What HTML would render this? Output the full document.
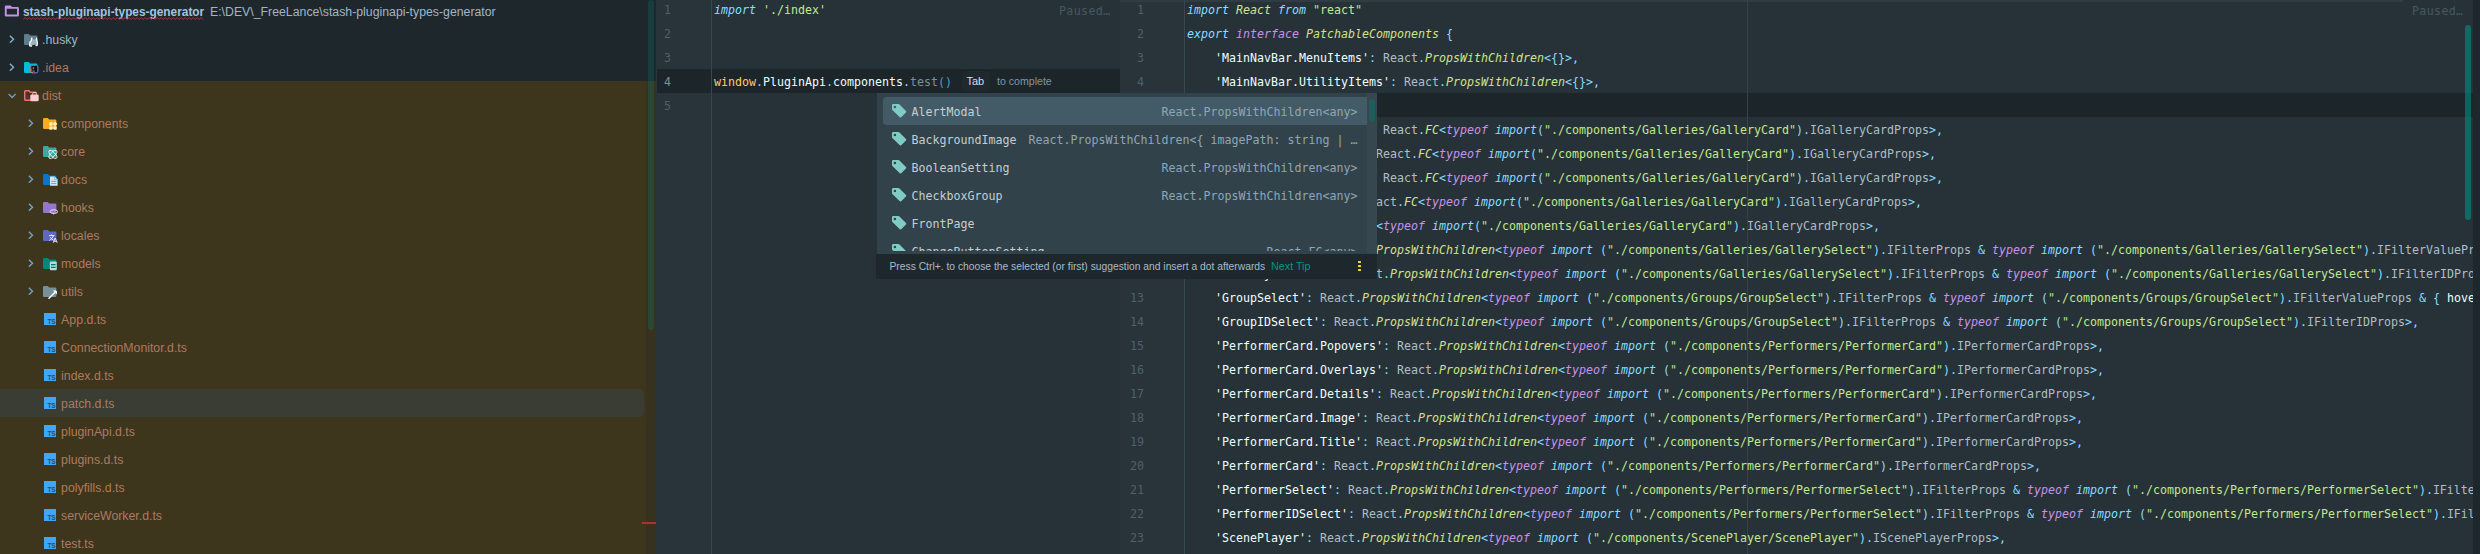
<!DOCTYPE html>
<html lang="en"><head><meta charset="utf-8"><title>IDE</title>
<style>
html,body{margin:0;padding:0;background:#263238;}
body{width:2480px;height:554px;position:relative;overflow:hidden;font-family:"Liberation Sans",sans-serif;}
.ab{position:absolute;display:block}
#tree{position:absolute;left:0;top:0;width:656px;height:554px;background:#1e272c;overflow:hidden}
#olive{position:absolute;left:0;top:81px;width:656px;height:473px;background:#3d351c}
#track{position:absolute;left:646px;top:81px;width:10px;height:473px;background:#36321f}
#thumb{position:absolute;left:648px;top:0px;width:6px;height:330px;border-radius:3px;background:rgba(0,150,136,.2)}
#sel{position:absolute;left:-6px;top:389px;width:650px;height:28px;border-radius:5px;background:#393d33}
#err{position:absolute;left:642px;top:522px;width:14px;height:2px;background:#b0302f}
#sep{position:absolute;left:656px;top:0;width:1px;height:554px;background:#2a353b}
.tx{position:absolute;height:22px;line-height:22px;font-size:12.3px;white-space:pre}
.root{color:#a0c6e1;font-size:11.87px}
.root b{font-weight:bold}
.path{color:#a2b5c4}
.tb{color:#9fb6c6}
.ig{color:#ad7a60}
.ts{position:absolute;width:12px;height:12px;background:#42a5f5}
.ts span{position:absolute;right:0.5px;bottom:0px;font:bold 6.5px/7px "Liberation Sans",sans-serif;color:#2b4a63;letter-spacing:-0.2px}
.ed{position:absolute;top:0;height:554px;overflow:hidden;background:#263238}
.gut{position:absolute;left:0;top:0;height:554px;background:#28333a}
.gl{position:absolute;top:0;width:1px;height:554px;background:#37474f}
.cur{position:absolute;left:0;right:0;height:24px;background:#1c252a}
.num{position:absolute;height:24px;line-height:24px;color:#4e606a;font:11.643px/24px "DejaVu Sans Mono","Liberation Mono",monospace}
.ln{position:absolute;height:24px;line-height:24px;white-space:pre;color:#b0bec5;font:11.643px/24px "DejaVu Sans Mono","Liberation Mono",monospace}
.i{color:#89ddff;font-style:italic}
.k{color:#c792ea;font-style:italic}
.t{color:#d2e38b;font-style:italic}
.s{color:#c3e88d}
.o{color:#89ddff}
.w{color:#eeffff}
.n{color:#b0bec5}
.y{color:#ffcb6b}
.g{color:#7f8e9a}
.g2{color:#5a9ab4}
.paused{position:absolute;top:-1px;height:24px;color:#465761;font:11.643px/24px "DejaVu Sans Mono","Liberation Mono",monospace;letter-spacing:0.35px}
#pop{position:absolute;left:877px;top:93px;width:500px;height:161px;background:#32424a;overflow:hidden;box-sizing:border-box}
#psel{position:absolute;left:6px;top:4px;width:484px;height:28px;border-radius:4px 0 0 4px;background:#435b67}
#ptrack{position:absolute;left:490px;top:0;width:10px;height:160px;background:#37474f}
#pthumb{position:absolute;left:492px;top:6px;width:6px;height:23px;border-radius:3px;background:#1f5c5c}
.pi{position:absolute;left:34.5px;width:446px;height:28px;line-height:28px;white-space:pre;font:11.643px/28px "DejaVu Sans Mono","Liberation Mono",monospace}
.pn{color:#c4cfd5}
.pt{position:absolute;right:0;top:0;color:#8ea7b6}
#foot{position:absolute;left:876px;top:254px;width:501px;height:25px;background:#1e272c}
#foot .ft{position:absolute;left:13.5px;top:0;height:25px;line-height:25px;font-size:10.31px;color:#a8bccb;white-space:pre}
#foot .nt{color:#009688}
.dot{position:absolute;left:481.5px;width:3px;height:2px;border-radius:0.6px;background:#fdd835}
</style></head>
<body>
<div id="tree">
<div id="olive"></div>
<div id="track"></div>
<div id="sel"></div>
<svg class="ab" style="left:4px;top:5px" width="16" height="12" viewBox="0 0 16 12"><path fill-rule="evenodd" fill="#c690e6" d="M2 0.6 H6.2 Q6.8 0.6 7.2 1.1 L8 2 H13.7 Q14.9 2 14.9 3.2 V10.3 Q14.9 11.5 13.7 11.5 H2 Q0.8 11.5 0.8 10.3 V1.8 Q0.8 0.6 2 0.6 Z M2.7 3.8 V9.6 H13 V3.8 Z"/></svg>
<div class="tx root" style="left:23px;top:1px"><b>stash-pluginapi-types-generator</b></div>
<div class="tx path" style="left:210px;top:1px">E:\DEV\_FreeLance\stash-pluginapi-types-generator</div>
<svg class="ab" style="left:23px;top:17px" width="182" height="4" viewBox="0 0 182 4"><path d="M0.2 2.5 L2.2 0.5 L4.2 2.5 L6.2 0.5 L8.2 2.5 L10.2 0.5 L12.2 2.5 L14.2 0.5 L16.2 2.5 L18.2 0.5 L20.2 2.5 L22.2 0.5 L24.2 2.5 L26.2 0.5 L28.2 2.5 L30.2 0.5 L32.2 2.5 L34.2 0.5 L36.2 2.5 L38.2 0.5 L40.2 2.5 L42.2 0.5 L44.2 2.5 L46.2 0.5 L48.2 2.5 L50.2 0.5 L52.2 2.5 L54.2 0.5 L56.2 2.5 L58.2 0.5 L60.2 2.5 L62.2 0.5 L64.2 2.5 L66.2 0.5 L68.2 2.5 L70.2 0.5 L72.2 2.5 L74.2 0.5 L76.2 2.5 L78.2 0.5 L80.2 2.5 L82.2 0.5 L84.2 2.5 L86.2 0.5 L88.2 2.5 L90.2 0.5 L92.2 2.5 L94.2 0.5 L96.2 2.5 L98.2 0.5 L100.2 2.5 L102.2 0.5 L104.2 2.5 L106.2 0.5 L108.2 2.5 L110.2 0.5 L112.2 2.5 L114.2 0.5 L116.2 2.5 L118.2 0.5 L120.2 2.5 L122.2 0.5 L124.2 2.5 L126.2 0.5 L128.2 2.5 L130.2 0.5 L132.2 2.5 L134.2 0.5 L136.2 2.5 L138.2 0.5 L140.2 2.5 L142.2 0.5 L144.2 2.5 L146.2 0.5 L148.2 2.5 L150.2 0.5 L152.2 2.5 L154.2 0.5 L156.2 2.5 L158.2 0.5 L160.2 2.5 L162.2 0.5 L164.2 2.5 L166.2 0.5 L168.2 2.5 L170.2 0.5 L172.2 2.5 L174.2 0.5 L176.2 2.5 L178.2 0.5 L180.2 2.5" fill="none" stroke="#b5403b" stroke-width="0.9" stroke-linejoin="miter"/></svg>
<svg class="ab" style="left:9.3px;top:35.1px" width="5.8" height="8.4" viewBox="0 0 5.8 8.4"><path d="M0.9 0.7 L4.5 4.2 L0.9 7.7" fill="none" stroke="#8fb0c6" stroke-width="1.4"/></svg>
<svg class="ab" style="left:24.3px;top:33.5px" width="15" height="13" viewBox="0 0 15 13"><path d="M1.2 0 H4.8 L6.2 1.5 H12.2 Q13.4 1.5 13.4 2.7 V9.8 Q13.4 11 12.2 11 H1.2 Q0 11 0 9.8 V1.2 Q0 0 1.2 0 Z" fill="#607d8b"/><path d="M5.6 11.9 Q5 8.5 7 6.8 L7.6 3.6 L9.3 5.6 H11 L12.6 3.6 L13 6.8 Q14 8.8 13.4 11.2 L12.6 12 L11.3 10.3 Q9 10.4 7.6 12.1 Z" fill="#9fb2bd"/><path d="M5.8 11.8 Q5.2 8.5 7.2 6.8 L7.8 4 M12.5 4 L12.9 6.8 Q13.8 9 13.2 11.2 L12 11.6 M6 11.9 L7.4 12.1" fill="none" stroke="#fff" stroke-width="1.2" stroke-linecap="round"/></svg>
<div class="tx tb" style="left:42.1px;top:29px">.husky</div>
<svg class="ab" style="left:9.3px;top:63.1px" width="5.8" height="8.4" viewBox="0 0 5.8 8.4"><path d="M0.9 0.7 L4.5 4.2 L0.9 7.7" fill="none" stroke="#8fb0c6" stroke-width="1.4"/></svg>
<svg class="ab" style="left:24.3px;top:61.5px" width="15" height="13" viewBox="0 0 15 13"><path d="M1.2 0 H4.8 L6.2 1.5 H12.2 Q13.4 1.5 13.4 2.7 V9.8 Q13.4 11 12.2 11 H1.2 Q0 11 0 9.8 V1.2 Q0 0 1.2 0 Z" fill="#00bcd4"/><rect x="6.9" y="3.5" width="6.9" height="7.3" rx="1.2" fill="#0c0d12" stroke="#e8407a" stroke-width="1"/><path d="M6.9 7 V9.6 Q6.9 10.8 8.1 10.8 H9" fill="none" stroke="#f0822e" stroke-width="1"/><path d="M11 3.5 H12.6 Q13.8 3.5 13.8 4.7 V9.6 Q13.8 10.8 12.6 10.8 H9.4" fill="none" stroke="#1f7be6" stroke-width="1"/><rect x="8.4" y="8.7" width="2.4" height="0.7" fill="#ddd"/><rect x="8.6" y="5.2" width="1.6" height="2" fill="#777"/></svg>
<div class="tx ig" style="left:42.1px;top:57px">.idea</div>
<svg class="ab" style="left:7.6000000000000005px;top:92.89999999999999px" width="8.4" height="5.8" viewBox="0 0 8.4 5.8"><path d="M0.7 0.9 L4.2 4.5 L7.7 0.9" fill="none" stroke="#6fa1c4" stroke-width="1.4"/></svg>
<svg class="ab" style="left:24.3px;top:89.5px" width="16" height="13" viewBox="0 0 16 13"><path d="M1.6 0.7 H4.8 L6.2 2.2 H11.6 Q12.4 2.2 12.4 3 V3.6 M7 10.3 H1.6 Q0.7 10.3 0.7 9.4 V1.6 Q0.7 0.7 1.6 0.7" fill="#5a3030" stroke="#e57373" stroke-width="1.4"/><rect x="6.3" y="4.4" width="8.4" height="6.9" rx="1.3" fill="#ffcdd2"/><path d="M8.7 4.6 V3.7 Q8.7 2.7 9.7 2.7 H11.3 Q12.3 2.7 12.3 3.7 V4.6" fill="none" stroke="#ffcdd2" stroke-width="1"/></svg>
<div class="tx ig" style="left:42.1px;top:85px">dist</div>
<svg class="ab" style="left:28.3px;top:119.10000000000001px" width="5.8" height="8.4" viewBox="0 0 5.8 8.4"><path d="M0.9 0.7 L4.5 4.2 L0.9 7.7" fill="none" stroke="#78a5c5" stroke-width="1.4"/></svg>
<svg class="ab" style="left:43.2px;top:117.5px" width="15" height="13" viewBox="0 0 15 13"><path d="M1.2 0 H4.8 L6.2 1.5 H12.2 Q13.4 1.5 13.4 2.7 V9.8 Q13.4 11 12.2 11 H1.2 Q0 11 0 9.8 V1.2 Q0 0 1.2 0 Z" fill="#f9a825"/><g fill="#fff3c4"><rect x="6.3" y="4.3" width="3.2" height="3.2"/><rect x="6.3" y="8.5" width="3.2" height="3.2"/><rect x="10.5" y="8.5" width="3.2" height="3.2"/><path d="M12.1 3.6 L14.4 5.9 L12.1 8.2 L9.8 5.9 Z"/></g></svg>
<div class="tx ig" style="left:61.1px;top:113px">components</div>
<svg class="ab" style="left:28.3px;top:147.1px" width="5.8" height="8.4" viewBox="0 0 5.8 8.4"><path d="M0.9 0.7 L4.5 4.2 L0.9 7.7" fill="none" stroke="#78a5c5" stroke-width="1.4"/></svg>
<svg class="ab" style="left:43.2px;top:145.5px" width="15" height="13" viewBox="0 0 15 13"><path d="M1.2 0 H4.8 L6.2 1.5 H12.2 Q13.4 1.5 13.4 2.7 V9.8 Q13.4 11 12.2 11 H1.2 Q0 11 0 9.8 V1.2 Q0 0 1.2 0 Z" fill="#3aa99f"/><g fill="none" stroke="#fff" stroke-width="0.8"><ellipse cx="9.9" cy="8.4" rx="5.2" ry="2.1" transform="rotate(45 9.9 8.4)"/><ellipse cx="9.9" cy="8.4" rx="5.2" ry="2.1" transform="rotate(-45 9.9 8.4)"/><path d="M6 4.7 H13.8 M6 12.1 H13.8" stroke-width="0.6" stroke-dasharray="1.6 1.2"/></g></svg>
<div class="tx ig" style="left:61.1px;top:141px">core</div>
<svg class="ab" style="left:28.3px;top:175.1px" width="5.8" height="8.4" viewBox="0 0 5.8 8.4"><path d="M0.9 0.7 L4.5 4.2 L0.9 7.7" fill="none" stroke="#78a5c5" stroke-width="1.4"/></svg>
<svg class="ab" style="left:43.2px;top:173.5px" width="15" height="13" viewBox="0 0 15 13"><path d="M1.2 0 H4.8 L6.2 1.5 H12.2 Q13.4 1.5 13.4 2.7 V9.8 Q13.4 11 12.2 11 H1.2 Q0 11 0 9.8 V1.2 Q0 0 1.2 0 Z" fill="#0d74c8"/><path d="M7 2.6 H11.8 L14.6 5.4 V11.8 H7 Z" fill="#cfe9fb"/><path d="M11.6 2.8 V5.6 H14.4" fill="none" stroke="#5aa9e6" stroke-width="0.7"/><path d="M8.2 7.4 H13.3 M8.2 9.5 H13.3" stroke="#3f98e0" stroke-width="0.8"/></svg>
<div class="tx ig" style="left:61.1px;top:169px">docs</div>
<svg class="ab" style="left:28.3px;top:203.1px" width="5.8" height="8.4" viewBox="0 0 5.8 8.4"><path d="M0.9 0.7 L4.5 4.2 L0.9 7.7" fill="none" stroke="#78a5c5" stroke-width="1.4"/></svg>
<svg class="ab" style="left:43.2px;top:201.5px" width="15" height="13" viewBox="0 0 15 13"><path d="M1.2 0 H4.8 L6.2 1.5 H12.2 Q13.4 1.5 13.4 2.7 V9.8 Q13.4 11 12.2 11 H1.2 Q0 11 0 9.8 V1.2 Q0 0 1.2 0 Z" fill="#9575cd"/><ellipse cx="10.9" cy="9.6" rx="3.8" ry="1.8" fill="none" stroke="#f3e5f5" stroke-width="1"/><path d="M9.5 11.3 L10.5 12.8 L11.2 11.3" fill="#f3e5f5"/></svg>
<div class="tx ig" style="left:61.1px;top:197px">hooks</div>
<svg class="ab" style="left:28.3px;top:231.1px" width="5.8" height="8.4" viewBox="0 0 5.8 8.4"><path d="M0.9 0.7 L4.5 4.2 L0.9 7.7" fill="none" stroke="#78a5c5" stroke-width="1.4"/></svg>
<svg class="ab" style="left:43.2px;top:229.5px" width="15" height="13" viewBox="0 0 15 13"><path d="M1.2 0 H4.8 L6.2 1.5 H12.2 Q13.4 1.5 13.4 2.7 V9.8 Q13.4 11 12.2 11 H1.2 Q0 11 0 9.8 V1.2 Q0 0 1.2 0 Z" fill="#5c6bc0"/><g fill="none" stroke="#e8eaf6" stroke-width="0.95"><path d="M6 5.5 H11.5 M8.7 4.5 V5.5 M10.6 5.5 Q9.5 9 6.3 10.5 M7.3 7 Q8.5 9.3 10.5 10.2"/><path d="M10.2 12.8 L12.2 8 L14.2 12.8 M11 11.3 H13.4"/></g></svg>
<div class="tx ig" style="left:61.1px;top:225px">locales</div>
<svg class="ab" style="left:28.3px;top:259.09999999999997px" width="5.8" height="8.4" viewBox="0 0 5.8 8.4"><path d="M0.9 0.7 L4.5 4.2 L0.9 7.7" fill="none" stroke="#78a5c5" stroke-width="1.4"/></svg>
<svg class="ab" style="left:43.2px;top:257.5px" width="15" height="13" viewBox="0 0 15 13"><path d="M1.2 0 H4.8 L6.2 1.5 H12.2 Q13.4 1.5 13.4 2.7 V9.8 Q13.4 11 12.2 11 H1.2 Q0 11 0 9.8 V1.2 Q0 0 1.2 0 Z" fill="#00897b"/><rect x="6.8" y="3.6" width="7" height="8.6" rx="1.2" fill="#b2dfdb"/><path d="M8 6.6 H12.6 M8 9.4 H12.6" stroke="#00796b" stroke-width="1.1"/></svg>
<div class="tx ig" style="left:61.1px;top:253px">models</div>
<svg class="ab" style="left:28.3px;top:287.09999999999997px" width="5.8" height="8.4" viewBox="0 0 5.8 8.4"><path d="M0.9 0.7 L4.5 4.2 L0.9 7.7" fill="none" stroke="#78a5c5" stroke-width="1.4"/></svg>
<svg class="ab" style="left:43.2px;top:285.5px" width="15" height="13" viewBox="0 0 15 13"><path d="M1.2 0 H4.8 L6.2 1.5 H12.2 Q13.4 1.5 13.4 2.7 V9.8 Q13.4 11 12.2 11 H1.2 Q0 11 0 9.8 V1.2 Q0 0 1.2 0 Z" fill="#78909c"/><path d="M6 12.3 L11.5 6.8" stroke="#fff" stroke-width="1.5" stroke-linecap="round"/><path d="M10 4.6 L14 8.6 L14 5.4 L12.6 4.2 Z" fill="#fff"/></svg>
<div class="tx ig" style="left:61.1px;top:281px">utils</div>
<div class="ts" style="left:44px;top:313px"><span>TS</span></div>
<div class="tx ig" style="left:61.1px;top:309px">App.d.ts</div>
<div class="ts" style="left:44px;top:341px"><span>TS</span></div>
<div class="tx ig" style="left:61.1px;top:337px">ConnectionMonitor.d.ts</div>
<div class="ts" style="left:44px;top:369px"><span>TS</span></div>
<div class="tx ig" style="left:61.1px;top:365px">index.d.ts</div>
<div class="ts" style="left:44px;top:397px"><span>TS</span></div>
<div class="tx ig" style="left:61.1px;top:393px">patch.d.ts</div>
<div class="ts" style="left:44px;top:425px"><span>TS</span></div>
<div class="tx ig" style="left:61.1px;top:421px">pluginApi.d.ts</div>
<div class="ts" style="left:44px;top:453px"><span>TS</span></div>
<div class="tx ig" style="left:61.1px;top:449px">plugins.d.ts</div>
<div class="ts" style="left:44px;top:481px"><span>TS</span></div>
<div class="tx ig" style="left:61.1px;top:477px">polyfills.d.ts</div>
<div class="ts" style="left:44px;top:509px"><span>TS</span></div>
<div class="tx ig" style="left:61.1px;top:505px">serviceWorker.d.ts</div>
<div class="ts" style="left:44px;top:537px"><span>TS</span></div>
<div class="tx ig" style="left:61.1px;top:533px">test.ts</div>
<div id="thumb"></div>
<div id="err"></div>
</div>
<div id="sep"></div>

<div class="ed" id="mid" style="left:657px;width:463px">
<div class="gut" style="width:54px"></div>
<div class="cur" style="top:69px"></div>
<div class="gl" style="left:54px"></div>
<div class="num" style="left:7px;top:-2px">1</div>
<div class="num" style="left:7px;top:22px">2</div>
<div class="num" style="left:7px;top:46px">3</div>
<div class="num" style="left:7px;top:70px;color:#7b909c">4</div>
<div class="num" style="left:7px;top:94px">5</div>

<div class="ln" style="left:57px;top:-2px"><span class="i">import</span> <span class="s">'./index'</span></div>
<div class="ln" style="left:57px;top:70px"><span class="y">window</span><span class="o">.</span><span class="w">PluginApi</span><span class="o">.</span><span class="w">components</span><span class="o">.</span><span class="g">test</span><span class="g2">()</span></div>
<div class="ab" style="left:305px;top:71px;width:28px;height:20px;border-radius:4px;background:#1e282d"></div>
<div class="tx" style="left:309.5px;top:70.4px;color:#d3dee6;font-size:11px">Tab</div>
<div class="tx" style="left:340px;top:70.4px;color:#85949e;font-size:10.6px">to complete</div>
<div class="paused" style="left:402px">Paused…</div>
</div>

<div class="ed" id="right" style="left:1120px;width:1353px">
<div class="gut" style="width:64px"></div>
<div class="ab" style="left:0;top:0;width:1283px;height:2px;background:#303c43"></div>
<div class="cur" style="top:93px"></div>
<div class="gl" style="left:64px"></div>
<div class="gl" style="left:627px;background:#34434b"></div>
<div class="num" style="left:10px;width:14px;text-align:right;top:-2px">1</div>
<div class="num" style="left:10px;width:14px;text-align:right;top:22px">2</div>
<div class="num" style="left:10px;width:14px;text-align:right;top:46px">3</div>
<div class="num" style="left:10px;width:14px;text-align:right;top:70px">4</div>
<div class="num" style="left:10px;width:14px;text-align:right;top:286px">13</div>
<div class="num" style="left:10px;width:14px;text-align:right;top:310px">14</div>
<div class="num" style="left:10px;width:14px;text-align:right;top:334px">15</div>
<div class="num" style="left:10px;width:14px;text-align:right;top:358px">16</div>
<div class="num" style="left:10px;width:14px;text-align:right;top:382px">17</div>
<div class="num" style="left:10px;width:14px;text-align:right;top:406px">18</div>
<div class="num" style="left:10px;width:14px;text-align:right;top:430px">19</div>
<div class="num" style="left:10px;width:14px;text-align:right;top:454px">20</div>
<div class="num" style="left:10px;width:14px;text-align:right;top:478px">21</div>
<div class="num" style="left:10px;width:14px;text-align:right;top:502px">22</div>
<div class="num" style="left:10px;width:14px;text-align:right;top:526px">23</div>

<div style="position:absolute;left:67px;top:0">
<div class="ln" style="top:-2px"><span class="i">import</span> <span class="t">React</span> <span class="i">from</span> <span class="s">"react"</span></div>
<div class="ln" style="top:22px"><span class="i">export</span> <span class="k">interface</span> <span class="t">PatchableComponents</span> <span class="o">{</span></div>
<div class="ln" style="top:46px">    <span class="w">'MainNavBar.MenuItems'</span><span class="o">:</span> <span class="n">React</span><span class="o">.</span><span class="t">PropsWithChildren</span><span class="o">&lt;</span><span class="o">{</span><span class="o">}</span><span class="o">&gt;</span><span class="o">,</span></div>
<div class="ln" style="top:70px">    <span class="w">'MainNavBar.UtilityItems'</span><span class="o">:</span> <span class="n">React</span><span class="o">.</span><span class="t">PropsWithChildren</span><span class="o">&lt;</span><span class="o">{</span><span class="o">}</span><span class="o">&gt;</span><span class="o">,</span></div>
<div class="ln" style="top:94px"></div>
<div class="ln" style="top:118px">    <span class="w">'GalleryCard.Popovers'</span><span class="o">:</span> <span class="n">React</span><span class="o">.</span><span class="t">FC</span><span class="o">&lt;</span><span class="k">typeof</span> <span class="i">import</span><span class="o">(</span><span class="s">"./components/Galleries/GalleryCard"</span><span class="o">)</span><span class="o">.</span><span class="n">IGalleryCardProps</span><span class="o">&gt;</span><span class="o">,</span></div>
<div class="ln" style="top:142px">    <span class="w">'GalleryCard.Details'</span><span class="o">:</span> <span class="n">React</span><span class="o">.</span><span class="t">FC</span><span class="o">&lt;</span><span class="k">typeof</span> <span class="i">import</span><span class="o">(</span><span class="s">"./components/Galleries/GalleryCard"</span><span class="o">)</span><span class="o">.</span><span class="n">IGalleryCardProps</span><span class="o">&gt;</span><span class="o">,</span></div>
<div class="ln" style="top:166px">    <span class="w">'GalleryCard.Overlays'</span><span class="o">:</span> <span class="n">React</span><span class="o">.</span><span class="t">FC</span><span class="o">&lt;</span><span class="k">typeof</span> <span class="i">import</span><span class="o">(</span><span class="s">"./components/Galleries/GalleryCard"</span><span class="o">)</span><span class="o">.</span><span class="n">IGalleryCardProps</span><span class="o">&gt;</span><span class="o">,</span></div>
<div class="ln" style="top:190px">    <span class="w">'GalleryCard.Image'</span><span class="o">:</span> <span class="n">React</span><span class="o">.</span><span class="t">FC</span><span class="o">&lt;</span><span class="k">typeof</span> <span class="i">import</span><span class="o">(</span><span class="s">"./components/Galleries/GalleryCard"</span><span class="o">)</span><span class="o">.</span><span class="n">IGalleryCardProps</span><span class="o">&gt;</span><span class="o">,</span></div>
<div class="ln" style="top:214px">    <span class="w">'GalleryCard'</span><span class="o">:</span> <span class="n">React</span><span class="o">.</span><span class="t">FC</span><span class="o">&lt;</span><span class="k">typeof</span> <span class="i">import</span><span class="o">(</span><span class="s">"./components/Galleries/GalleryCard"</span><span class="o">)</span><span class="o">.</span><span class="n">IGalleryCardProps</span><span class="o">&gt;</span><span class="o">,</span></div>
<div class="ln" style="top:238px">    <span class="w">'GallerySelect'</span><span class="o">:</span> <span class="n">React</span><span class="o">.</span><span class="t">PropsWithChildren</span><span class="o">&lt;</span><span class="k">typeof</span> <span class="i">import</span> <span class="o">(</span><span class="s">"./components/Galleries/GallerySelect"</span><span class="o">)</span><span class="o">.</span><span class="n">IFilterProps</span> <span class="o">&amp;</span> <span class="k">typeof</span> <span class="i">import</span> <span class="o">(</span><span class="s">"./components/Galleries/GallerySelect"</span><span class="o">)</span><span class="o">.</span><span class="n">IFilterValueProps</span> <span class="o">&amp;</span> <span class="o">{</span> <span class="w">hoverPlacement</span></div>
<div class="ln" style="top:262px">    <span class="w">'GalleryIDSelect'</span><span class="o">:</span> <span class="n">React</span><span class="o">.</span><span class="t">PropsWithChildren</span><span class="o">&lt;</span><span class="k">typeof</span> <span class="i">import</span> <span class="o">(</span><span class="s">"./components/Galleries/GallerySelect"</span><span class="o">)</span><span class="o">.</span><span class="n">IFilterProps</span> <span class="o">&amp;</span> <span class="k">typeof</span> <span class="i">import</span> <span class="o">(</span><span class="s">"./components/Galleries/GallerySelect"</span><span class="o">)</span><span class="o">.</span><span class="n">IFilterIDProps</span><span class="o">&gt;</span><span class="o">,</span></div>
<div class="ln" style="top:286px">    <span class="w">'GroupSelect'</span><span class="o">:</span> <span class="n">React</span><span class="o">.</span><span class="t">PropsWithChildren</span><span class="o">&lt;</span><span class="k">typeof</span> <span class="i">import</span> <span class="o">(</span><span class="s">"./components/Groups/GroupSelect"</span><span class="o">)</span><span class="o">.</span><span class="n">IFilterProps</span> <span class="o">&amp;</span> <span class="k">typeof</span> <span class="i">import</span> <span class="o">(</span><span class="s">"./components/Groups/GroupSelect"</span><span class="o">)</span><span class="o">.</span><span class="n">IFilterValueProps</span> <span class="o">&amp;</span> <span class="o">{</span> <span class="w">hoverPlacement</span></div>
<div class="ln" style="top:310px">    <span class="w">'GroupIDSelect'</span><span class="o">:</span> <span class="n">React</span><span class="o">.</span><span class="t">PropsWithChildren</span><span class="o">&lt;</span><span class="k">typeof</span> <span class="i">import</span> <span class="o">(</span><span class="s">"./components/Groups/GroupSelect"</span><span class="o">)</span><span class="o">.</span><span class="n">IFilterProps</span> <span class="o">&amp;</span> <span class="k">typeof</span> <span class="i">import</span> <span class="o">(</span><span class="s">"./components/Groups/GroupSelect"</span><span class="o">)</span><span class="o">.</span><span class="n">IFilterIDProps</span><span class="o">&gt;</span><span class="o">,</span></div>
<div class="ln" style="top:334px">    <span class="w">'PerformerCard.Popovers'</span><span class="o">:</span> <span class="n">React</span><span class="o">.</span><span class="t">PropsWithChildren</span><span class="o">&lt;</span><span class="k">typeof</span> <span class="i">import</span> <span class="o">(</span><span class="s">"./components/Performers/PerformerCard"</span><span class="o">)</span><span class="o">.</span><span class="n">IPerformerCardProps</span><span class="o">&gt;</span><span class="o">,</span></div>
<div class="ln" style="top:358px">    <span class="w">'PerformerCard.Overlays'</span><span class="o">:</span> <span class="n">React</span><span class="o">.</span><span class="t">PropsWithChildren</span><span class="o">&lt;</span><span class="k">typeof</span> <span class="i">import</span> <span class="o">(</span><span class="s">"./components/Performers/PerformerCard"</span><span class="o">)</span><span class="o">.</span><span class="n">IPerformerCardProps</span><span class="o">&gt;</span><span class="o">,</span></div>
<div class="ln" style="top:382px">    <span class="w">'PerformerCard.Details'</span><span class="o">:</span> <span class="n">React</span><span class="o">.</span><span class="t">PropsWithChildren</span><span class="o">&lt;</span><span class="k">typeof</span> <span class="i">import</span> <span class="o">(</span><span class="s">"./components/Performers/PerformerCard"</span><span class="o">)</span><span class="o">.</span><span class="n">IPerformerCardProps</span><span class="o">&gt;</span><span class="o">,</span></div>
<div class="ln" style="top:406px">    <span class="w">'PerformerCard.Image'</span><span class="o">:</span> <span class="n">React</span><span class="o">.</span><span class="t">PropsWithChildren</span><span class="o">&lt;</span><span class="k">typeof</span> <span class="i">import</span> <span class="o">(</span><span class="s">"./components/Performers/PerformerCard"</span><span class="o">)</span><span class="o">.</span><span class="n">IPerformerCardProps</span><span class="o">&gt;</span><span class="o">,</span></div>
<div class="ln" style="top:430px">    <span class="w">'PerformerCard.Title'</span><span class="o">:</span> <span class="n">React</span><span class="o">.</span><span class="t">PropsWithChildren</span><span class="o">&lt;</span><span class="k">typeof</span> <span class="i">import</span> <span class="o">(</span><span class="s">"./components/Performers/PerformerCard"</span><span class="o">)</span><span class="o">.</span><span class="n">IPerformerCardProps</span><span class="o">&gt;</span><span class="o">,</span></div>
<div class="ln" style="top:454px">    <span class="w">'PerformerCard'</span><span class="o">:</span> <span class="n">React</span><span class="o">.</span><span class="t">PropsWithChildren</span><span class="o">&lt;</span><span class="k">typeof</span> <span class="i">import</span> <span class="o">(</span><span class="s">"./components/Performers/PerformerCard"</span><span class="o">)</span><span class="o">.</span><span class="n">IPerformerCardProps</span><span class="o">&gt;</span><span class="o">,</span></div>
<div class="ln" style="top:478px">    <span class="w">'PerformerSelect'</span><span class="o">:</span> <span class="n">React</span><span class="o">.</span><span class="t">PropsWithChildren</span><span class="o">&lt;</span><span class="k">typeof</span> <span class="i">import</span> <span class="o">(</span><span class="s">"./components/Performers/PerformerSelect"</span><span class="o">)</span><span class="o">.</span><span class="n">IFilterProps</span> <span class="o">&amp;</span> <span class="k">typeof</span> <span class="i">import</span> <span class="o">(</span><span class="s">"./components/Performers/PerformerSelect"</span><span class="o">)</span><span class="o">.</span><span class="n">IFilterValueProps</span> <span class="o">&amp;</span> <span class="o">{</span> <span class="w">hoverPlacement</span></div>
<div class="ln" style="top:502px">    <span class="w">'PerformerIDSelect'</span><span class="o">:</span> <span class="n">React</span><span class="o">.</span><span class="t">PropsWithChildren</span><span class="o">&lt;</span><span class="k">typeof</span> <span class="i">import</span> <span class="o">(</span><span class="s">"./components/Performers/PerformerSelect"</span><span class="o">)</span><span class="o">.</span><span class="n">IFilterProps</span> <span class="o">&amp;</span> <span class="k">typeof</span> <span class="i">import</span> <span class="o">(</span><span class="s">"./components/Performers/PerformerSelect"</span><span class="o">)</span><span class="o">.</span><span class="n">IFilterIDProps</span><span class="o">&gt;</span><span class="o">,</span></div>
<div class="ln" style="top:526px">    <span class="w">'ScenePlayer'</span><span class="o">:</span> <span class="n">React</span><span class="o">.</span><span class="t">PropsWithChildren</span><span class="o">&lt;</span><span class="k">typeof</span> <span class="i">import</span> <span class="o">(</span><span class="s">"./components/ScenePlayer/ScenePlayer"</span><span class="o">)</span><span class="o">.</span><span class="n">IScenePlayerProps</span><span class="o">&gt;</span><span class="o">,</span></div>

</div>
<div class="paused" style="left:1292px">Paused…</div>
<div class="ab" style="left:1345px;top:25px;width:6px;height:195px;border-radius:3px;background:rgba(0,150,136,.56)"></div>
</div>
<div class="ab" style="left:2473px;top:0;width:7px;height:554px;background:#1e272c"></div>

<div id="pop">
<div id="ptrack"></div>
<div id="psel"></div>
<div id="pthumb"></div>
<svg class="ab" style="left:14.5px;top:10.6px" width="15" height="14" viewBox="0 0 15 14"><path d="M1.2 0 H6.4 Q7 0 7.5 0.5 L14 7 Q14.6 7.7 14 8.4 L9.2 13.3 Q8.5 13.9 7.8 13.3 L0.6 6.2 Q0 5.7 0 5 V1.2 Q0 0 1.2 0 Z M2.9 1.7 A1.25 1.25 0 1 0 2.9 4.2 A1.25 1.25 0 1 0 2.9 1.7 Z" fill="#80cbc4" fill-rule="evenodd"/></svg>
<div class="pi" style="top:5px"><span class="pn">AlertModal</span><span class="pt">React.PropsWithChildren&lt;any&gt;</span></div>
<svg class="ab" style="left:14.5px;top:38.6px" width="15" height="14" viewBox="0 0 15 14"><path d="M1.2 0 H6.4 Q7 0 7.5 0.5 L14 7 Q14.6 7.7 14 8.4 L9.2 13.3 Q8.5 13.9 7.8 13.3 L0.6 6.2 Q0 5.7 0 5 V1.2 Q0 0 1.2 0 Z M2.9 1.7 A1.25 1.25 0 1 0 2.9 4.2 A1.25 1.25 0 1 0 2.9 1.7 Z" fill="#80cbc4" fill-rule="evenodd"/></svg>
<div class="pi" style="top:33px"><span class="pn">BackgroundImage</span><span class="pt">React.PropsWithChildren&lt;{ imagePath: string | …</span></div>
<svg class="ab" style="left:14.5px;top:66.6px" width="15" height="14" viewBox="0 0 15 14"><path d="M1.2 0 H6.4 Q7 0 7.5 0.5 L14 7 Q14.6 7.7 14 8.4 L9.2 13.3 Q8.5 13.9 7.8 13.3 L0.6 6.2 Q0 5.7 0 5 V1.2 Q0 0 1.2 0 Z M2.9 1.7 A1.25 1.25 0 1 0 2.9 4.2 A1.25 1.25 0 1 0 2.9 1.7 Z" fill="#80cbc4" fill-rule="evenodd"/></svg>
<div class="pi" style="top:61px"><span class="pn">BooleanSetting</span><span class="pt">React.PropsWithChildren&lt;any&gt;</span></div>
<svg class="ab" style="left:14.5px;top:94.6px" width="15" height="14" viewBox="0 0 15 14"><path d="M1.2 0 H6.4 Q7 0 7.5 0.5 L14 7 Q14.6 7.7 14 8.4 L9.2 13.3 Q8.5 13.9 7.8 13.3 L0.6 6.2 Q0 5.7 0 5 V1.2 Q0 0 1.2 0 Z M2.9 1.7 A1.25 1.25 0 1 0 2.9 4.2 A1.25 1.25 0 1 0 2.9 1.7 Z" fill="#80cbc4" fill-rule="evenodd"/></svg>
<div class="pi" style="top:89px"><span class="pn">CheckboxGroup</span><span class="pt">React.PropsWithChildren&lt;any&gt;</span></div>
<svg class="ab" style="left:14.5px;top:122.6px" width="15" height="14" viewBox="0 0 15 14"><path d="M1.2 0 H6.4 Q7 0 7.5 0.5 L14 7 Q14.6 7.7 14 8.4 L9.2 13.3 Q8.5 13.9 7.8 13.3 L0.6 6.2 Q0 5.7 0 5 V1.2 Q0 0 1.2 0 Z M2.9 1.7 A1.25 1.25 0 1 0 2.9 4.2 A1.25 1.25 0 1 0 2.9 1.7 Z" fill="#80cbc4" fill-rule="evenodd"/></svg>
<div class="pi" style="top:117px"><span class="pn">FrontPage</span><span class="pt"></span></div>
<svg class="ab" style="left:14.5px;top:150.6px" width="15" height="14" viewBox="0 0 15 14"><path d="M1.2 0 H6.4 Q7 0 7.5 0.5 L14 7 Q14.6 7.7 14 8.4 L9.2 13.3 Q8.5 13.9 7.8 13.3 L0.6 6.2 Q0 5.7 0 5 V1.2 Q0 0 1.2 0 Z M2.9 1.7 A1.25 1.25 0 1 0 2.9 4.2 A1.25 1.25 0 1 0 2.9 1.7 Z" fill="#80cbc4" fill-rule="evenodd"/></svg>
<div class="pi" style="top:145px"><span class="pn">ChangeButtonSetting</span><span class="pt">React.FC&lt;any&gt;</span></div>
<div class="ab" style="left:0;top:158px;width:490px;height:3px;background:#32424a"></div>
</div>
<div id="foot"><div class="ft">Press Ctrl+. to choose the selected (or first) suggestion and insert a dot afterwards</div><div class="ft nt" style="left:395px;font-size:10.77px">Next Tip</div>
<div class="dot" style="top:7px"></div><div class="dot" style="top:11px"></div><div class="dot" style="top:15px"></div>
</div>
</body></html>
